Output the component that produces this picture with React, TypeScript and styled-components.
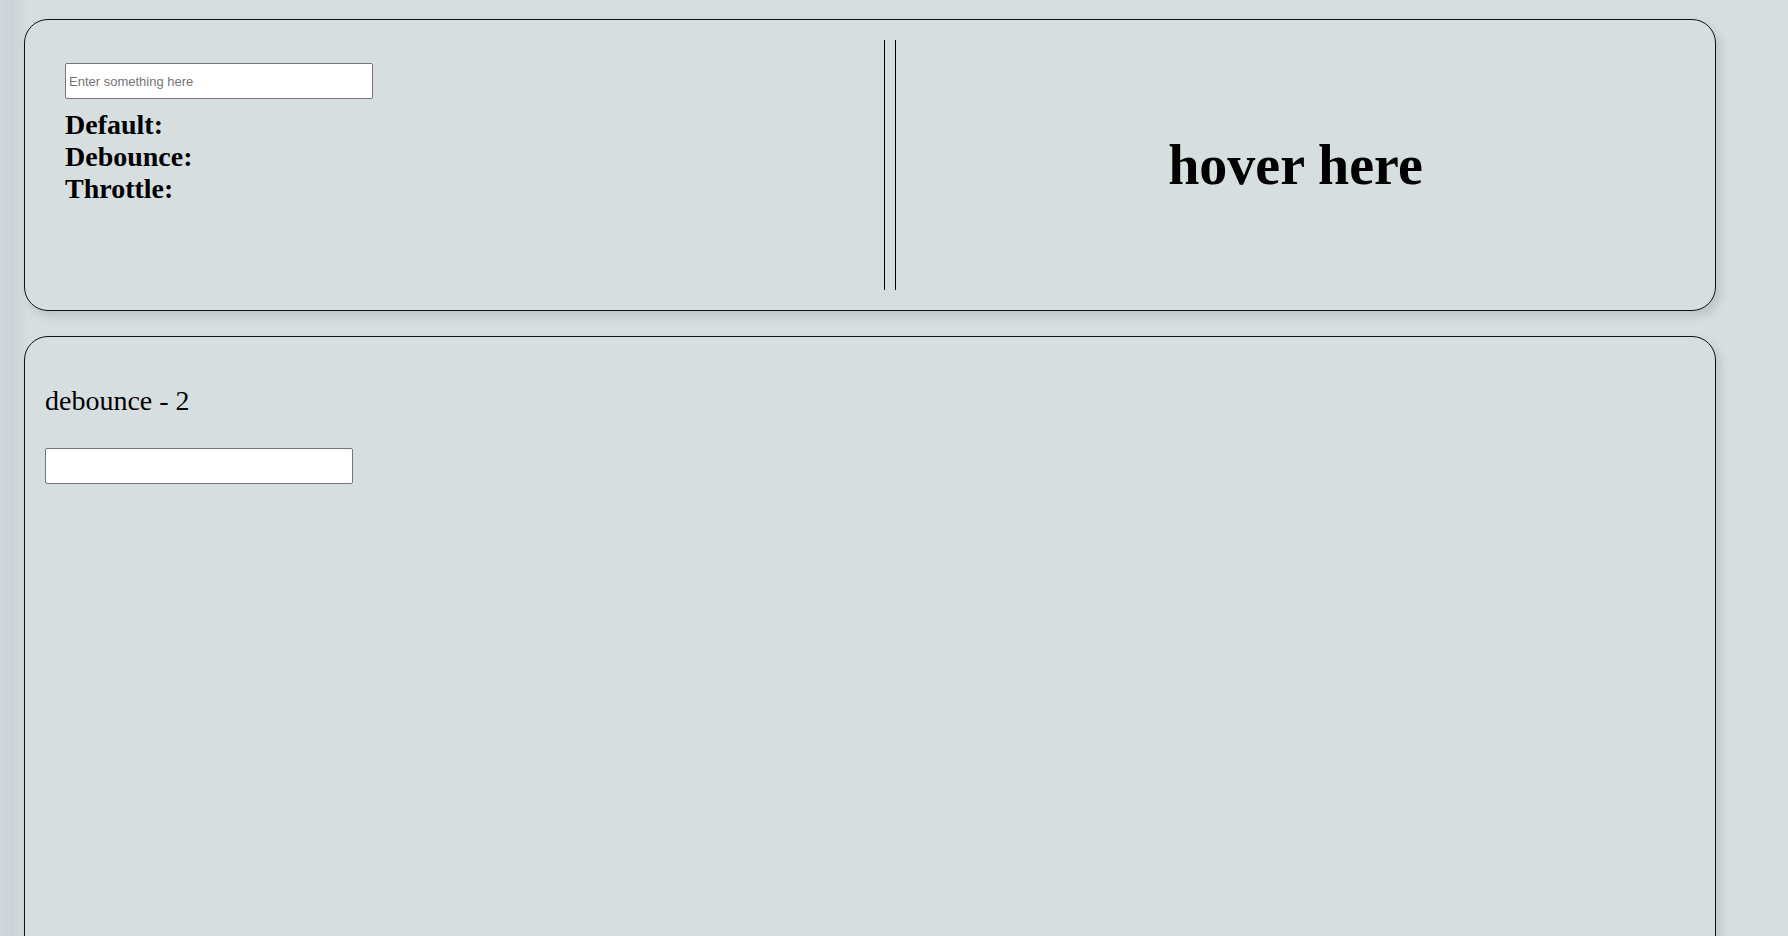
import React, { useState } from "react";
import styled, { createGlobalStyle } from "styled-components";

const GlobalStyle = createGlobalStyle`
  html, body {
    margin: 0;
    padding: 0;
    background: linear-gradient(to right, #cfd7da 0, #cbd3d6 12px, #d0d8da 20px, #d6dee0 28px);
    font-family: "Liberation Serif", "Times New Roman", serif;
    color: #000;
  }
`;

const Page = styled.div`
  display: flex;
  flex-direction: column;
  gap: 25px;
  padding: 19px 0 0 24px;
  height: 936px;
  box-sizing: border-box;
  overflow: hidden;
`;

const Card = styled.section<{ $height?: number }>`
  width: 1692px;
  height: ${(p) => (p.$height ? `${p.$height}px` : "auto")};
  flex-shrink: 0;
  box-sizing: border-box;
  border: 1px solid #111;
  border-radius: 24px;
  background: #d6dee0;
  box-shadow: 4px 5px 10px rgba(0, 0, 0, 0.12);
  padding: 20px;
`;

const Split = styled.div`
  display: flex;
  gap: 10px;
  height: 100%;
`;

const LeftCol = styled.div`
  flex: 0 0 840px;
  box-sizing: border-box;
  border-right: 1px solid #000;
  padding: 23px 20px 20px;
`;

const RightCol = styled.div`
  flex: 1;
  border-left: 1px solid #000;
  display: flex;
  align-items: center;
  justify-content: center;
`;

const TextInput = styled.input`
  display: block;
  width: 308px;
  height: 36px;
  box-sizing: border-box;
  border: 1px solid #767676;
  border-radius: 2px;
  padding: 1px 3px;
  background: #fff;
  font-family: "Liberation Sans", Arial, sans-serif;
  font-size: 13px;
  outline: none;

  &::placeholder {
    color: #757575;
  }
`;

const Readouts = styled.div`
  margin-top: 10px;
`;

const Readout = styled.div`
  font-size: 28px;
  font-weight: bold;
  line-height: 32px;
`;

const HoverTarget = styled.h1`
  margin: 0;
  font-size: 56px;
  font-weight: bold;
  line-height: 1.15;
`;

const Title = styled.p`
  font-size: 28px;
  margin: 28px 0 31px;
  line-height: 32px;
`;

export default function App() {
  const [value, setValue] = useState("");
  const [second, setSecond] = useState("");

  return (
    <>
      <GlobalStyle />
      <Page>
        <Card $height={292}>
          <Split>
            <LeftCol>
              <TextInput
                placeholder="Enter something here"
                value={value}
                onChange={(e) => setValue(e.target.value)}
              />
              <Readouts>
                <Readout>Default:</Readout>
                <Readout>Debounce:</Readout>
                <Readout>Throttle:</Readout>
              </Readouts>
            </LeftCol>
            <RightCol>
              <HoverTarget>hover here</HoverTarget>
            </RightCol>
          </Split>
        </Card>
        <Card $height={700}>
          <Title>debounce - 2</Title>
          <TextInput value={second} onChange={(e) => setSecond(e.target.value)} />
        </Card>
      </Page>
    </>
  );
}
